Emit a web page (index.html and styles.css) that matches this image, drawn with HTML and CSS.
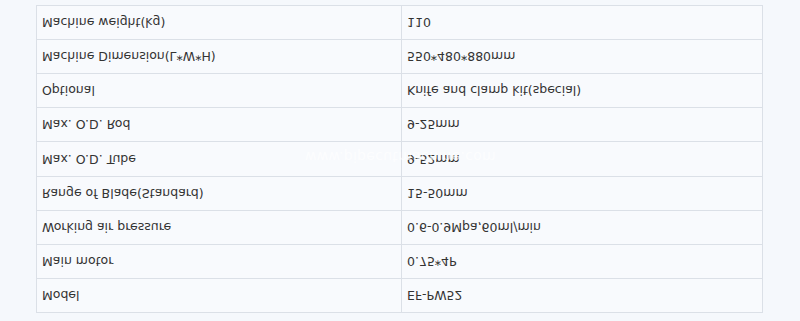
FILE: index.html
```html
<!DOCTYPE html>
<html>
<head>
<meta charset="utf-8">
<link rel="stylesheet" href="styles.css">
</head>
<body>
<div class="page">
  <table class="spec">
    <tbody>
      <tr><td class="k">Model</td><td class="v">EF-PW52</td></tr>
      <tr><td class="k">Main motor</td><td class="v">0.75*4P</td></tr>
      <tr><td class="k">Working air pressure</td><td class="v">0.6-0.9Mpa,60ml/min</td></tr>
      <tr><td class="k">Range of Blade(Standard)</td><td class="v">15-50mm</td></tr>
      <tr><td class="k">Max. O.D. Tube</td><td class="v">9-52mm</td></tr>
      <tr><td class="k">Max. O.D. Rod</td><td class="v">9-25mm</td></tr>
      <tr><td class="k">Optional</td><td class="v">Knife and clamp kit(special)</td></tr>
      <tr><td class="k">Machine Dimension(L*W*H)</td><td class="v">550*480*880mm</td></tr>
      <tr><td class="k">Machine weight(kg)</td><td class="v">110</td></tr>
    </tbody>
  </table>
  <div class="mark">www.pipecutmachine.com</div>
</div>
</body>
</html>
```
FILE: styles.css
```css
html, body {
  margin: 0;
  padding: 0;
  background: #f5f8fc;
}
.page {
  position: relative;
  height: 321px;
  overflow: hidden;
  padding-top: 8px;
  box-sizing: border-box;
  transform: scaleY(-1);
  font-family: "DejaVu Sans", Verdana, sans-serif;
  font-size: 12.5px;
  color: #333;
}
.spec {
  margin-left: 36px;
  width: 727px;
  height: 308px;
  border-collapse: collapse;
  background: #f8fafd;
}
.spec td {
  border: 1px solid #dbe0e7;
  padding: 0 0 0 5px;
  vertical-align: middle;
  text-align: left;
}
.spec td.k {
  width: 359px;
}
.mark {
  position: absolute;
  left: 305px;
  top: 156px;
  font-size: 14px;
  color: rgba(255, 255, 255, 0.7);
  letter-spacing: 0.3px;
}
```
